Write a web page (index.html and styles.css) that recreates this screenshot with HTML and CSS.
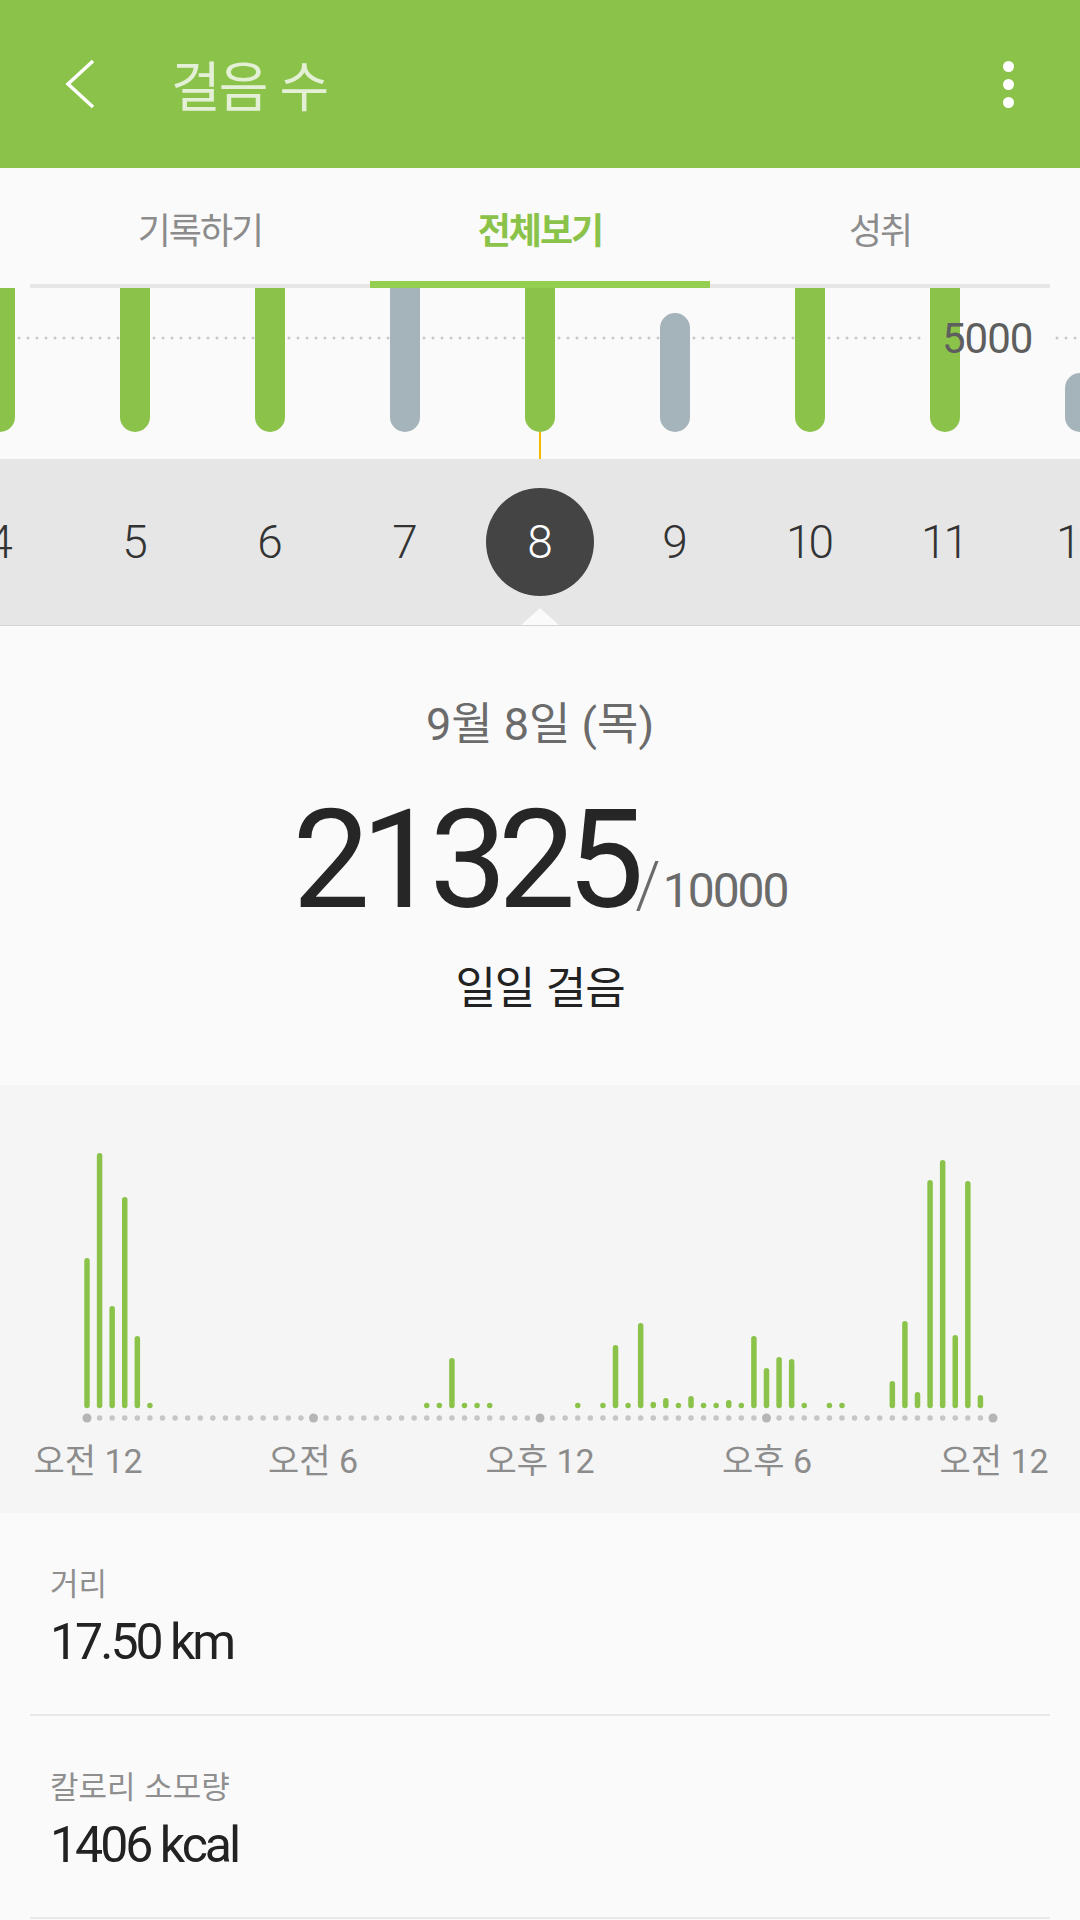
FILE: index.html
```html
<!DOCTYPE html>
<html lang="ko">
<head>
  <meta charset="UTF-8" />
  <title>걸음 수</title>
  <link rel="stylesheet" href="styles.css">
</head>
<body>
  <header class="appbar">
    <svg class="back" width="40" height="50" viewBox="0 0 40 50">
      <polyline points="33,2 8,25 33,48" />
    </svg>
    <h1 class="title">걸음 수</h1>
    <div class="more"><span></span><span></span><span></span></div>
  </header>

  <nav class="tabs">
    <div class="tab">기록하기</div>
    <div class="tab active">전체보기</div>
    <div class="tab">성취</div>
  </nav>

  <svg class="week-chart" width="1080" height="171" viewBox="0 0 1080 171">
    <line class="goal-line" x1="1" y1="50" x2="921" y2="50" />
    <line class="goal-line" x1="1057" y1="50" x2="1080" y2="50" />
    <rect class="bar-ok" x="-15" y="-30" width="30" height="174" rx="15" />
    <rect class="bar-ok" x="120" y="-30" width="30" height="174" rx="15" />
    <rect class="bar-ok" x="255" y="-30" width="30" height="174" rx="15" />
    <rect class="bar-low" x="390" y="-30" width="30" height="174" rx="15" />
    <rect class="bar-ok" x="525" y="-30" width="30" height="174" rx="15" />
    <rect class="bar-low" x="660" y="25" width="30" height="119" rx="15" />
    <rect class="bar-ok" x="795" y="-30" width="30" height="174" rx="15" />
    <rect class="bar-ok" x="930" y="-30" width="30" height="174" rx="15" />
    <rect class="bar-low" x="1065" y="85" width="30" height="59" rx="15" />
    <text class="goal-label" x="942" y="65">5000</text>
    <line class="cursor" x1="540" y1="144" x2="540" y2="171" />
  </svg>

  <div class="days">
    <div class="days-row">
      <div class="day"><span>4</span></div>
      <div class="day"><span>5</span></div>
      <div class="day"><span>6</span></div>
      <div class="day"><span>7</span></div>
      <div class="day selected"><span>8</span></div>
      <div class="day"><span>9</span></div>
      <div class="day"><span>10</span></div>
      <div class="day"><span>11</span></div>
      <div class="day"><span>12</span></div>
    </div>
  </div>

  <section class="summary">
    <div class="summary-date">9월 8일 (목)</div>
    <div class="summary-count">21325<span class="summary-slash">/</span><span class="summary-goal">10000</span></div>
    <div class="summary-label">일일 걸음</div>
  </section>

  <section class="day-chart">
    <svg width="1080" height="428" viewBox="0 0 1080 428">
      <line class="axis-dots" x1="87" y1="333" x2="993" y2="333" />
      <circle class="axis-major" cx="87" cy="333" r="4.5" />
      <circle class="axis-major" cx="313.5" cy="333" r="4.5" />
      <circle class="axis-major" cx="540" cy="333" r="4.5" />
      <circle class="axis-major" cx="766.5" cy="333" r="4.5" />
      <circle class="axis-major" cx="993" cy="333" r="4.5" />
      <g class="steps">
        <line x1="87" y1="175.75" x2="87" y2="320.5" />
        <line x1="99.58" y1="70.75" x2="99.58" y2="320.5" />
        <line x1="112.17" y1="223.75" x2="112.17" y2="320.5" />
        <line x1="124.75" y1="114.75" x2="124.75" y2="320.5" />
        <line x1="137.33" y1="253.75" x2="137.33" y2="320.5" />
        <line x1="149.92" y1="320.5" x2="149.92" y2="320.5" />
        <line x1="426.75" y1="320.5" x2="426.75" y2="320.5" />
        <line x1="439.33" y1="320.5" x2="439.33" y2="320.5" />
        <line x1="451.92" y1="275.75" x2="451.92" y2="320.5" />
        <line x1="464.5" y1="320.5" x2="464.5" y2="320.5" />
        <line x1="477.08" y1="320.5" x2="477.08" y2="320.5" />
        <line x1="489.67" y1="320.5" x2="489.67" y2="320.5" />
        <line x1="577.75" y1="320.5" x2="577.75" y2="320.5" />
        <line x1="602.92" y1="320.5" x2="602.92" y2="320.5" />
        <line x1="615.5" y1="262.75" x2="615.5" y2="320.5" />
        <line x1="628.08" y1="320.5" x2="628.08" y2="320.5" />
        <line x1="640.67" y1="240.75" x2="640.67" y2="320.5" />
        <line x1="653.25" y1="319.5" x2="653.25" y2="320.5" />
        <line x1="665.83" y1="315.75" x2="665.83" y2="320.5" />
        <line x1="678.42" y1="320.5" x2="678.42" y2="320.5" />
        <line x1="691" y1="313.75" x2="691" y2="320.5" />
        <line x1="703.58" y1="320.5" x2="703.58" y2="320.5" />
        <line x1="716.17" y1="320.5" x2="716.17" y2="320.5" />
        <line x1="728.75" y1="317.75" x2="728.75" y2="320.5" />
        <line x1="741.33" y1="320.5" x2="741.33" y2="320.5" />
        <line x1="753.92" y1="253.75" x2="753.92" y2="320.5" />
        <line x1="766.5" y1="285.75" x2="766.5" y2="320.5" />
        <line x1="779.08" y1="274.75" x2="779.08" y2="320.5" />
        <line x1="791.67" y1="276.75" x2="791.67" y2="320.5" />
        <line x1="804.25" y1="320.5" x2="804.25" y2="320.5" />
        <line x1="829.42" y1="320.5" x2="829.42" y2="320.5" />
        <line x1="842" y1="320.5" x2="842" y2="320.5" />
        <line x1="892.33" y1="298.75" x2="892.33" y2="320.5" />
        <line x1="904.92" y1="238.75" x2="904.92" y2="320.5" />
        <line x1="917.5" y1="309.75" x2="917.5" y2="320.5" />
        <line x1="930.08" y1="97.75" x2="930.08" y2="320.5" />
        <line x1="942.67" y1="77.75" x2="942.67" y2="320.5" />
        <line x1="955.25" y1="252.75" x2="955.25" y2="320.5" />
        <line x1="967.83" y1="98.75" x2="967.83" y2="320.5" />
        <line x1="980.42" y1="312.75" x2="980.42" y2="320.5" />
      </g>
      <text class="axis-label" x="88" y="388">오전 12</text>
      <text class="axis-label" x="313" y="388">오전 6</text>
      <text class="axis-label" x="540" y="388">오후 12</text>
      <text class="axis-label" x="767" y="388">오후 6</text>
      <text class="axis-label" x="994" y="388">오전 12</text>
    </svg>
  </section>

  <section class="stats">
    <div class="stat">
      <div class="stat-label">거리</div>
      <div class="stat-value">17.50 km</div>
    </div>
    <div class="stat">
      <div class="stat-label">칼로리 소모량</div>
      <div class="stat-value">1406 kcal</div>
    </div>
  </section>
</body>
</html>
```

FILE: styles.css
```css
body {
  margin: 0;
  width: 1080px;
  background: #fafafa;
  font-family: Roboto, "Noto Sans CJK KR", sans-serif;
  overflow: hidden;
}
.appbar {
  height: 168px;
  background: #8bc34a;
  display: flex;
  align-items: center;
  padding-left: 60px;
  box-sizing: border-box;
}
.back polyline {
  fill: none;
  stroke: #fff;
  stroke-width: 3.5;
}
.title {
  margin: 0 0 0 71px;
  font: 400 54px/54px "Noto Sans CJK KR", sans-serif;
  letter-spacing: -2px;
  color: #e3f0d6;
}
.more {
  margin-left: auto;
  margin-right: 66px;
  display: flex;
  flex-direction: column;
  gap: 7px;
}
.more span {
  width: 11px;
  height: 11px;
  border-radius: 50%;
  background: #fff;
}
.tabs {
  display: flex;
  padding: 0 30px;
}
.tab {
  flex: 1;
  height: 120px;
  box-sizing: border-box;
  display: flex;
  align-items: center;
  justify-content: center;
  font: 400 36px/40px "Noto Sans CJK KR", sans-serif;
  letter-spacing: -2px;
  color: #8c8c8c;
  box-shadow: inset 0 -4px 0 #e6e6e6;
}
.tab.active {
  color: #8bc34a;
  font-weight: 700;
  box-shadow: inset 0 -7px 0 #94cf4f;
}
.week-chart {
  display: block;
}
.goal-line {
  stroke: #c9c9c9;
  stroke-width: 3;
  stroke-linecap: round;
  stroke-dasharray: 0 9;
}
.bar-ok {
  fill: #8bc34a;
}
.bar-low {
  fill: #a5b3bb;
}
.goal-label {
  font: 42px Roboto, sans-serif;
  letter-spacing: -1px;
  fill: #5e5e5e;
}
.cursor {
  stroke: #f5b800;
  stroke-width: 2;
}
.days {
  position: relative;
  height: 166px;
  background: #e6e6e6;
  border-bottom: 1px solid #d4d4d4;
  overflow: hidden;
}
.days::after {
  content: "";
  position: absolute;
  left: 520px;
  bottom: -1px;
  border-left: 20px solid transparent;
  border-right: 20px solid transparent;
  border-bottom: 18px solid #fafafa;
}
.days-row {
  display: flex;
  width: 1215px;
  height: 100%;
  margin-left: -67.5px;
  align-items: center;
}
.day {
  flex: 0 0 135px;
  display: flex;
  justify-content: center;
  font-size: 46px;
  font-weight: 300;
  letter-spacing: -3px;
  color: #333;
}
.day span {
  width: 108px;
  height: 108px;
  display: flex;
  align-items: center;
  justify-content: center;
  padding-right: 3px;
  box-sizing: border-box;
  border-radius: 50%;
}
.day.selected span {
  background: #444;
  color: #fff;
}
.summary {
  padding: 74px 0 75px;
  text-align: center;
}
.summary-date {
  font-size: 45px;
  line-height: 50px;
  color: #6b6b6b;
}
.summary-count {
  margin-top: 40px;
  font-size: 138px;
  line-height: 140px;
  letter-spacing: -9px;
  color: #262626;
}
.summary-slash {
  font-size: 64px;
  font-weight: 300;
  line-height: 1;
  letter-spacing: 2px;
  color: #6b6b6b;
}
.summary-goal {
  font-size: 48px;
  line-height: 1;
  letter-spacing: -2px;
  color: #6b6b6b;
}
.summary-label {
  margin-top: 30px;
  font: 400 44px/50px "Noto Sans CJK KR", sans-serif;
  letter-spacing: -1px;
  color: #222;
}
.day-chart {
  height: 428px;
  background: #f5f5f5;
}
.day-chart svg {
  display: block;
}
.axis-dots {
  stroke: #c6c6c6;
  stroke-width: 5.5;
  stroke-linecap: round;
  stroke-dasharray: 0 12.583;
}
.axis-major {
  fill: #b5b5b5;
}
.steps line {
  stroke: #8bc34a;
  stroke-width: 5.5;
  stroke-linecap: round;
}
.axis-label {
  font: 34px Roboto, "Noto Sans CJK KR", sans-serif;
  fill: #8c8c8c;
  text-anchor: middle;
}
.stats {
  padding: 0 30px;
}
.stat {
  padding: 49px 20px 42px;
  border-bottom: 2px solid #e8e8e8;
}
.stat-label {
  font: 400 31px/40px "Noto Sans CJK KR", sans-serif;
  color: #8f8f8f;
}
.stat-value {
  margin-top: 10px;
  font-size: 50px;
  line-height: 60px;
  letter-spacing: -3px;
  color: #222;
}
```
